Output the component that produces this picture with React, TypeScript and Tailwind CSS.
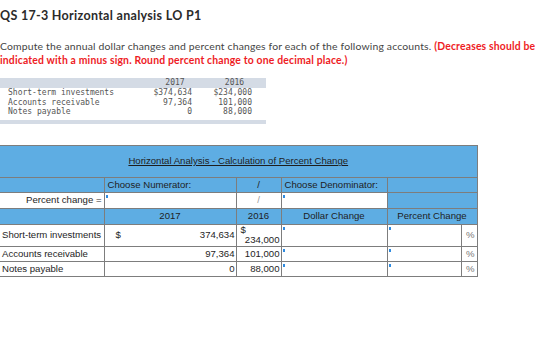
import React from 'react';

const accounts = [
  { name: 'Short-term investments', y2017: '$374,634', y2016: '$234,000' },
  { name: 'Accounts receivable', y2017: '97,364', y2016: '101,000' },
  { name: 'Notes payable', y2017: '0', y2016: '88,000' },
];

const InputCell: React.FC<{ className?: string; colSpan?: number }> = ({ className = '', colSpan }) => (
  <td colSpan={colSpan} className={`relative bg-white border border-[#7d7d7d] p-0 ${className}`}>
    <span className="absolute left-[1px] top-[2px] w-[2px] h-[3px] bg-[#2f8be0]" />
  </td>
);

const App: React.FC = () => {
  const cell = 'border border-[#7d7d7d] px-[3px] py-0';

  return (
    <div className="w-[538px] h-[359px] bg-white overflow-hidden font-['Lato',sans-serif] text-[#333]">
      <h1 className="pt-[8px] text-[12.5px] font-bold leading-[16px] tracking-[0.3px] text-[#2b2b2b]">QS 17-3 Horizontal analysis LO P1</h1>

      <p className="mt-[16px] text-[10.4px] leading-[13.5px] tracking-[0.17px] text-[#444]">
        Compute the annual dollar changes and percent changes for each of the following accounts.{' '}
        <span className="font-bold text-[#ee1c25]">
          (Decreases should be indicated with a minus sign. Round percent change to one decimal place.)
        </span>
      </p>

      {/* Given data */}
      <div className="mt-[11px] w-[266px] font-['DejaVu_Sans_Mono',monospace] text-[8px] text-[#555]">
        <div className="flex h-[10px] items-center bg-[#d4dbe5] leading-[10px]">
          <span className="w-[155px]" />
          <span className="w-[40px] text-center">2017</span>
          <span className="ml-[20px] w-[39px] text-center">2016</span>
        </div>
        {accounts.map(a => (
          <div key={a.name} className="flex h-[9.6px] items-center leading-[9.6px]">
            <span className="w-[142px] pl-[8px]">{a.name}</span>
            <span className="w-[50px] text-right">{a.y2017}</span>
            <span className="w-[60px] text-right">{a.y2016}</span>
          </div>
        ))}
        <div className="mt-[3px] h-[4px] bg-[#d4dbe5]" />
      </div>

      {/* Analysis table */}
      <table className="mt-[21px] w-[477px] table-fixed border-collapse bg-[#5eade3] font-['Liberation_Sans',Arial,sans-serif] text-[9.6px] text-[#1e1e1e]">
        <colgroup>
          <col className="w-[104px]" />
          <col className="w-[132px]" />
          <col className="w-[45px]" />
          <col className="w-[106px]" />
          <col className="w-[74px]" />
          <col className="w-[16px]" />
        </colgroup>
        <tbody>
          <tr className="h-[32px]">
            <td colSpan={6} className={`${cell} border-l-0 text-center`}>
              <span className="underline">Horizontal Analysis - Calculation of Percent Change</span>
            </td>
          </tr>
          <tr className="h-[15px]">
            <td className={`${cell} border-l-0`} />
            <td className={cell}>Choose Numerator:</td>
            <td className={`${cell} text-center`}>/</td>
            <td className={cell}>Choose Denominator:</td>
            <td colSpan={2} className={cell} />
          </tr>
          <tr className="h-[16px]">
            <td className={`${cell} border-l-0 bg-white text-right pr-[2px] whitespace-nowrap`}>Percent change =</td>
            <InputCell />
            <td className={`${cell} bg-white text-center text-[#999]`}>/</td>
            <InputCell />
            <td colSpan={2} className={cell} />
          </tr>
          <tr className="h-[15px]">
            <td className={`${cell} border-l-0`} />
            <td className={`${cell} text-center`}>2017</td>
            <td className={`${cell} text-center`}>2016</td>
            <td className={`${cell} text-center`}>Dollar Change</td>
            <td colSpan={2} className={`${cell} text-center`}>Percent Change</td>
          </tr>
          {accounts.map((a, i) => {
            const first = i === 0;
            return (
              <tr key={a.name} className={first ? 'h-[22px] bg-white' : 'h-[14px] bg-white'}>
                <td className={`${cell} border-l-0 pl-[2px] whitespace-nowrap`}>{a.name}</td>
                <td className={`${cell} pr-[1px]`}>
                  <div className="flex justify-between whitespace-nowrap">
                    <span className="pl-[8px]">{first ? '$' : ''}</span>
                    <span>{a.y2017.replace('$', '')}</span>
                  </div>
                </td>
                <td className={`${cell} pr-[1px] leading-[10px] whitespace-nowrap`}>
                  {first ? (
                    <div>
                      <div className="pl-[1px]">$</div>
                      <div className="text-right">234,000</div>
                    </div>
                  ) : (
                    <div className="text-right">{a.y2016}</div>
                  )}
                </td>
                <InputCell className="border-t-[#8ec2ea]" />
                <InputCell className="border-t-[#8ec2ea]" />
                <td className={`${cell} text-right text-[#777] pr-[2px]`}>%</td>
              </tr>
            );
          })}
        </tbody>
      </table>
    </div>
  );
};

export default App;
